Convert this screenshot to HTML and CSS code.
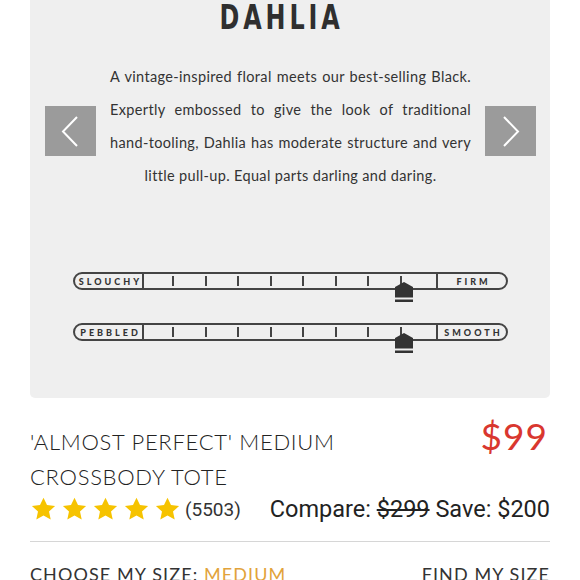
FILE: index.html
```html
<!DOCTYPE html>
<html>
<head>
<meta charset="utf-8">
<link rel="stylesheet" href="styles.css">
</head>
<body>
<section class="panel">
  <h1 class="title"><span>DAHLIA</span></h1>
  <div class="carousel">
    <button class="nav" aria-label="Previous">
      <svg width="51" height="50" viewBox="0 0 51 50"><polyline points="32,11 18,25.5 32,40" fill="none" stroke="#fff" stroke-width="2"/></svg>
    </button>
    <p class="desc">A vintage-inspired floral meets our best-selling Black. Expertly embossed to give the look of traditional <span class="nw">hand-tooling,</span> Dahlia has moderate structure and very little <span class="nw">pull-up.</span> Equal parts darling and daring.</p>
    <button class="nav" aria-label="Next">
      <svg width="51" height="50" viewBox="0 0 51 50"><polyline points="19,11 33,25.5 19,40" fill="none" stroke="#fff" stroke-width="2"/></svg>
    </button>
  </div>
  <div class="scales">
    <div class="scale">
      <span class="end left">SLOUCHY</span>
      <div class="track">
        <i></i><i></i><i></i><i></i><i></i><i></i><i></i><i></i><i></i>
        <svg class="marker" style="left: calc(88.89% - 9px)" width="18" height="21" viewBox="0 0 18 21"><polygon points="9,0 18,5 18,15.5 0,15.5 0,5" fill="#333"/><rect x="0" y="17.5" width="18" height="2.5" fill="#333"/></svg>
      </div>
      <span class="end right">FIRM</span>
    </div>
    <div class="scale">
      <span class="end left">PEBBLED</span>
      <div class="track">
        <i></i><i></i><i></i><i></i><i></i><i></i><i></i><i></i><i></i>
        <svg class="marker" style="left: calc(88.89% - 9px)" width="18" height="21" viewBox="0 0 18 21"><polygon points="9,0 18,5 18,15.5 0,15.5 0,5" fill="#333"/><rect x="0" y="17.5" width="18" height="2.5" fill="#333"/></svg>
      </div>
      <span class="end right">SMOOTH</span>
    </div>
  </div>
</section>
<section class="product">
  <div class="head">
    <h2 class="name">'ALMOST PERFECT' MEDIUM CROSSBODY TOTE</h2>
    <div class="price">$99</div>
  </div>
  <div class="meta">
    <div class="rating">
      <svg class="star" viewBox="0 0 24 24"><path d="M12 1.5l3.1 6.6 7.2.8-5.4 4.9 1.5 7.1L12 17.3l-6.4 3.6 1.5-7.1-5.4-4.9 7.2-.8z"/></svg>
      <svg class="star" viewBox="0 0 24 24"><path d="M12 1.5l3.1 6.6 7.2.8-5.4 4.9 1.5 7.1L12 17.3l-6.4 3.6 1.5-7.1-5.4-4.9 7.2-.8z"/></svg>
      <svg class="star" viewBox="0 0 24 24"><path d="M12 1.5l3.1 6.6 7.2.8-5.4 4.9 1.5 7.1L12 17.3l-6.4 3.6 1.5-7.1-5.4-4.9 7.2-.8z"/></svg>
      <svg class="star" viewBox="0 0 24 24"><path d="M12 1.5l3.1 6.6 7.2.8-5.4 4.9 1.5 7.1L12 17.3l-6.4 3.6 1.5-7.1-5.4-4.9 7.2-.8z"/></svg>
      <svg class="star" viewBox="0 0 24 24"><path d="M12 1.5l3.1 6.6 7.2.8-5.4 4.9 1.5 7.1L12 17.3l-6.4 3.6 1.5-7.1-5.4-4.9 7.2-.8z"/></svg>
      <span class="count">(5503)</span>
    </div>
    <div class="compare">Compare: <s>$299</s> Save: $200</div>
  </div>
  <div class="size">
    <div class="choose">CHOOSE MY SIZE: <span class="sel">MEDIUM</span></div>
    <div class="find">FIND MY SIZE</div>
  </div>
</section>
</body>
</html>
```
FILE: styles.css
```css
* { box-sizing: border-box; }
html, body { margin: 0; padding: 0; background: #fff; }
body { font-family: Lato, "Open Sans", sans-serif; color: #333; }

.panel {
  margin: 0 30px;
  height: 398px;
  background: #efefef;
  border-radius: 0 0 5px 5px;
  padding: 0 14px 0 15px;
}
.title {
  margin: 0;
  height: 34px;
  line-height: 34px;
  padding-right: 18px;
  text-align: center;
  font-family: "DejaVu Sans Condensed", "DejaVu Sans", sans-serif;
  font-stretch: condensed;
  font-weight: bold;
  font-size: 34px;
  color: #2f2f2f;
}
.title span {
  display: inline-block;
  letter-spacing: 5px;
  transform: scaleX(0.78);
}
.carousel {
  display: flex;
  align-items: flex-start;
  gap: 14px;
  margin-top: 26px;
}
.nav {
  flex: none;
  width: 51px;
  height: 50px;
  margin-top: 46px;
  padding: 0;
  border: 0;
  background: #9b9b9b;
  display: block;
}
.nav svg { display: block; }
.desc {
  flex: 1;
  margin: 0;
  font-size: 14.5px;
  line-height: 33px;
  letter-spacing: 0.35px;
  text-align: justify;
  text-align-last: center;
  color: #333;
}
.nw { white-space: nowrap; }
.scales {
  margin-top: 80px;
  padding: 0 28px 0 28px;
  display: flex;
  flex-direction: column;
  gap: 33px;
}
.scale {
  display: flex;
  height: 18px;
  border: 2px solid #444;
  border-radius: 9px;
}
.end {
  flex: none;
  display: flex;
  align-items: center;
  justify-content: center;
  font-size: 9px;
  font-weight: 900;
  letter-spacing: 3px;
  color: #333;
}
.end.left { width: 69px; border-right: 2px solid #444; padding-left: 4px; }
.end.right { width: 70px; border-left: 2px solid #444; padding-left: 3px; }
.track {
  flex: 1;
  position: relative;
  display: grid;
  grid-template-columns: repeat(9, 1fr);
}
.track i {
  background: linear-gradient(#444, #444) right 2px top 2px / 2px 10px no-repeat;
}
.track i:last-of-type { background: none; }
.marker {
  position: absolute;
  top: 8px;
}

.product { padding: 0 30px; }
.head {
  display: flex;
  justify-content: space-between;
  align-items: baseline;
  margin-top: 15px;
}
.name {
  margin: 0;
  max-width: 340px;
  font-weight: 300;
  font-size: 22px;
  line-height: 35px;
  letter-spacing: 0.7px;
  color: #222;
}
.price {
  font-size: 37px;
  color: #d9372f;
  letter-spacing: 1px;
  margin-right: 2px;
}
.meta {
  display: flex;
  justify-content: space-between;
  align-items: center;
  height: 30px;
  margin-top: 0;
  font-family: Roboto, sans-serif;
}
.rating { display: flex; align-items: center; gap: 4px; }
.star { width: 27px; height: 27px; fill: #f6c300; display: block; }
.count { font-size: 19px; color: #333; }
.compare { font-size: 23.5px; color: #222; }
.compare s { text-decoration-thickness: 1.5px; }
.size {
  border-top: 1px solid #d6d6d6;
  margin-top: 17px;
  padding-top: 20px;
  display: flex;
  justify-content: space-between;
  font-size: 18px;
  letter-spacing: 1.1px;
  line-height: 24px;
  color: #333;
}
.sel { color: #e2a33a; }
```
